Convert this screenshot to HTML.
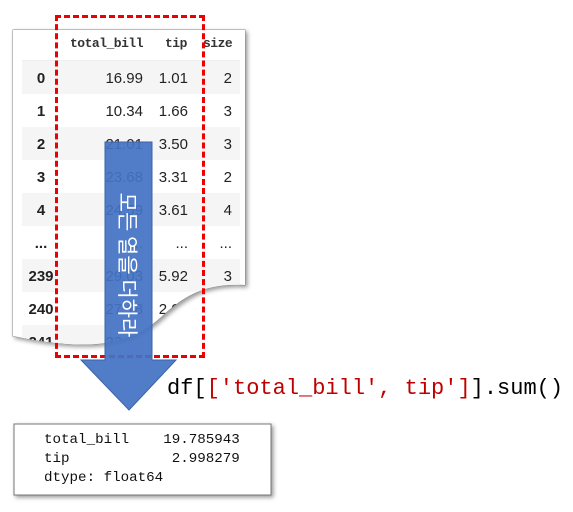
<html><head><style>
body{margin:0;width:573px;height:512px;background:#fff;position:relative;overflow:hidden;font-family:"Liberation Sans","Noto Sans CJK KR",sans-serif}
.t{position:absolute;left:0;top:0;width:573px;height:512px;clip-path:path('M13,30 H245 V285 C205,283 185,295 160,318 C130,345 90,352 13,336 Z');background:#fff}
.r{position:absolute;left:22px;width:218px;height:33px;font-size:15px;color:#222}
.g{background:#f5f5f5}
.r span{position:absolute;top:9px}
.i{left:0;width:38px;text-align:center;font-weight:bold}
.a{right:97px}.b{right:52px}.c{right:8px}
.h{font-family:"Liberation Mono",monospace;font-size:13px;font-weight:bold;letter-spacing:-0.5px;color:#333}
.m{font-family:"Liberation Mono",monospace}
</style></head><body>
<svg width="573" height="512" style="position:absolute;left:0;top:0">
<defs><filter id="s"><feDropShadow dx="2" dy="2" stdDeviation="2" flood-opacity=".4"/></filter></defs>
<path d="M13,30 H245 V285 C205,283 185,295 160,318 C130,345 90,352 13,336 Z" fill="#fff" stroke="#888" filter="url(#s)"/>
<rect x="14" y="424" width="257" height="71" fill="#fff" stroke="#777" filter="url(#s)"/>
</svg>
<div class="t">
<div class="r" style="top:28px;height:32px;border-bottom:1px solid #eee"><span class="h" style="left:48px;top:8px">total_bill</span><span class="h" style="left:143px;top:8px">tip</span><span class="h" style="left:181px;top:8px">size</span></div>
<div class="r g" style="top:61px"><span class="i">0</span><span class="a">16.99</span><span class="b">1.01</span><span class="c">2</span></div>
<div class="r" style="top:94px"><span class="i">1</span><span class="a">10.34</span><span class="b">1.66</span><span class="c">3</span></div>
<div class="r g" style="top:127px"><span class="i">2</span><span class="a">21.01</span><span class="b">3.50</span><span class="c">3</span></div>
<div class="r" style="top:160px"><span class="i">3</span><span class="a">23.68</span><span class="b">3.31</span><span class="c">2</span></div>
<div class="r g" style="top:193px"><span class="i">4</span><span class="a">24.59</span><span class="b">3.61</span><span class="c">4</span></div>
<div class="r" style="top:226px"><span class="i">...</span><span class="a">...</span><span class="b">...</span><span class="c">...</span></div>
<div class="r g" style="top:259px"><span class="i">239</span><span class="a">29.03</span><span class="b">5.92</span><span class="c">3</span></div>
<div class="r" style="top:292px"><span class="i">240</span><span class="a">27.18</span><span class="b">2.00</span><span class="c">2</span></div>
<div class="r g" style="top:325px"><span class="i">241</span><span class="a">22.67</span><span class="b">2.00</span><span class="c">2</span></div>
</div>
<div style="position:absolute;left:55px;top:15px;width:144px;height:337px;border:3px dashed #e00"></div>
<svg width="573" height="512" style="position:absolute;left:0;top:0">
<path d="M105,142 H152 V360 H176 L129,410 L81,360 H105 Z" fill="#4472c4" fill-opacity=".93" stroke="#3a62a8"/>
</svg>
<div style="position:absolute;left:128px;top:265px;transform:translate(-50%,-50%) rotate(90deg);color:#fff;font-size:21px;white-space:nowrap;font-family:'Noto Sans CJK KR',sans-serif">모든 열을 더하라</div>
<div class="m" style="position:absolute;left:167px;top:376px;font-size:22px;color:#000;white-space:pre">df[<span style="color:#c00000">['total_bill', tip']</span>].sum()</div>
<div class="m" style="position:absolute;left:44px;top:431px;font-size:14.2px;line-height:19px;color:#111;white-space:pre">total_bill    19.785943
tip            2.998279
dtype: float64</div>
</body></html>
